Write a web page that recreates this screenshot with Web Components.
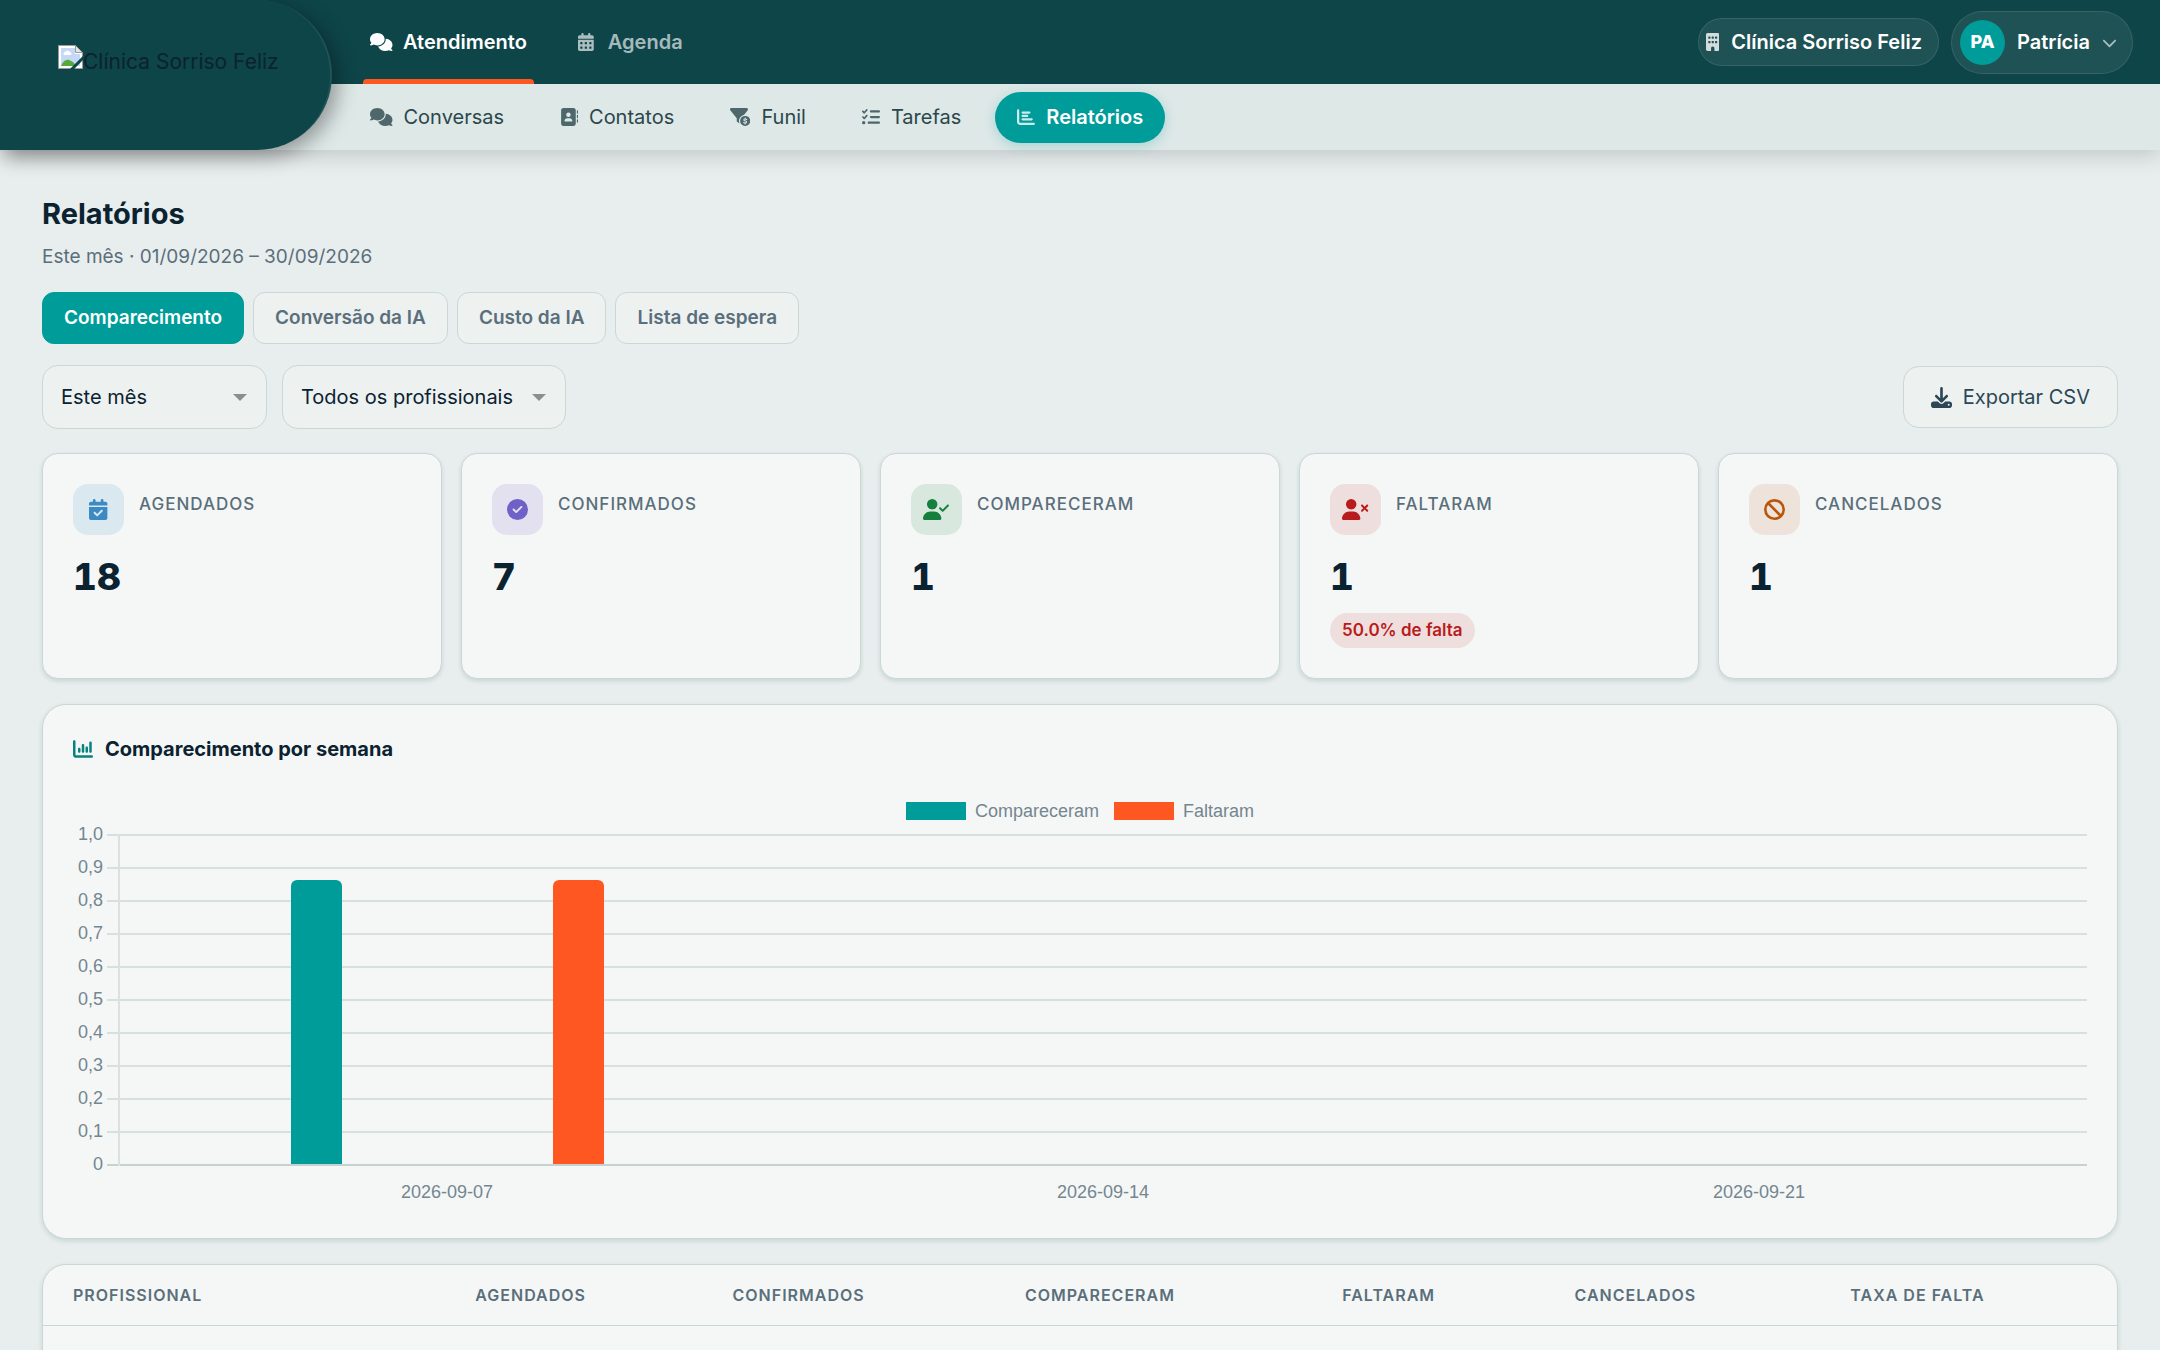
<!DOCTYPE html>
<html lang="pt-BR">
<head>
<meta charset="utf-8">
<meta name="viewport" content="width=device-width, initial-scale=1">
<title>Relatórios · Clínica Sorriso Feliz</title>
<style>
	:root {
		--brand: #009c99;
		--brand-dark: #0e4549;
		--accent: #ff5722;
		--page: #e8eded;
		--subnav: #dde8e7;
		--surface: #f5f7f6;
		--control: #edf1f0;
		--line: #c9d8d5;
		--ink: #0b2230;
		--ink-soft: #5a6f7b;
	}

	body {
		margin: 0;
		background: var(--page);
		color: var(--ink);
		font-family: Inter, "Liberation Sans", sans-serif;
		font-size: 20px;
		line-height: 28px;
	}
</style>
</head>
<body>
<app-header></app-header>
<reports-page></reports-page>

<script>
const CALENDAR_TOP = "M128 0c17.7 0 32 14.3 32 32V64H288V32c0-17.7 14.3-32 32-32s32 14.3 32 32V64h48c26.5 0 48 21.5 48 48v48H0V112C0 85.5 21.5 64 48 64H96V32c0-17.7 14.3-32 32-32z";
const USER = "M96 128a128 128 0 1 1 256 0A128 128 0 1 1 96 128zM0 482.3C0 383.8 79.8 304 178.3 304h91.4C368.2 304 448 383.8 448 482.3c0 16.4-13.3 29.7-29.7 29.7H29.7C13.3 512 0 498.7 0 482.3z";
const CHART_AXES = "M32 32c17.7 0 32 14.3 32 32V400c0 8.8 7.2 16 16 16H480c17.7 0 32 14.3 32 32s-14.3 32-32 32H80c-44.2 0-80-35.8-80-80V64C0 46.3 14.3 32 32 32z";

/** Icon name to [viewBox width, path data]. Every icon is 512 units tall. */
const ICONS = Object.freeze({
	comments: [640, "M208 352c114.9 0 208-78.8 208-176S322.9 0 208 0S0 78.8 0 176c0 38.6 14.7 74.3 39.6 103.4c-3.5 9.4-8.7 17.7-14.2 24.7c-4.8 6.2-9.7 11-13.3 14.3c-1.8 1.6-3.3 2.9-4.3 3.7c-.5 .4-.9 .7-1.1 .8l-.2 .2C1 327.2-1.4 334.4 .8 340.9S9.1 352 16 352c21.8 0 43.8-5.6 62.1-12.5c9.2-3.5 17.8-7.4 25.3-11.4C134.1 343.3 169.8 352 208 352zM448 176c0 112.3-99.1 196.9-216.5 207C255.8 457.4 336.4 512 432 512c38.2 0 73.9-8.7 104.7-23.9c7.5 4 16 7.9 25.2 11.4c18.3 6.9 40.3 12.5 62.1 12.5c6.9 0 13.1-4.5 15.2-11.1c2.1-6.6-.2-13.8-5.8-17.9l-.2-.2c-.2-.2-.6-.4-1.1-.8c-1-.8-2.5-2-4.3-3.7c-3.6-3.3-8.5-8.1-13.3-14.3c-5.5-7-10.7-15.4-14.2-24.7c24.9-29 39.6-64.7 39.6-103.4c0-92.8-84.9-168.9-192.6-175.5c.4 5.1 .6 10.3 .6 15.5z"],
	"calendar-days": [448, `${CALENDAR_TOP}M0 192H448V464c0 26.5-21.5 48-48 48H48c-26.5 0-48-21.5-48-48V192zm64 80v32c0 8.8 7.2 16 16 16h32c8.8 0 16-7.2 16-16V272c0-8.8-7.2-16-16-16H80c-8.8 0-16 7.2-16 16zm128 0v32c0 8.8 7.2 16 16 16h32c8.8 0 16-7.2 16-16V272c0-8.8-7.2-16-16-16H208c-8.8 0-16 7.2-16 16zm144-16c-8.8 0-16 7.2-16 16v32c0 8.8 7.2 16 16 16h32c8.8 0 16-7.2 16-16V272c0-8.8-7.2-16-16-16H336zM64 400v32c0 8.8 7.2 16 16 16h32c8.8 0 16-7.2 16-16V400c0-8.8-7.2-16-16-16H80c-8.8 0-16 7.2-16 16zm144-16c-8.8 0-16 7.2-16 16v32c0 8.8 7.2 16 16 16h32c8.8 0 16-7.2 16-16V400c0-8.8-7.2-16-16-16H208zm112 16v32c0 8.8 7.2 16 16 16h32c8.8 0 16-7.2 16-16V400c0-8.8-7.2-16-16-16H336c-8.8 0-16 7.2-16 16z`],
	"calendar-check": [448, `${CALENDAR_TOP}M0 192H448V464c0 26.5-21.5 48-48 48H48c-26.5 0-48-21.5-48-48V192zM329 305c9.4-9.4 9.4-24.6 0-33.9s-24.6-9.4-33.9 0l-95 95-47-47c-9.4-9.4-24.6-9.4-33.9 0s-9.4 24.6 0 33.9l64 64c9.4 9.4 24.6 9.4 33.9 0L329 305z`],
	"address-book": [512, "M96 0C60.7 0 32 28.7 32 64V448c0 35.3 28.7 64 64 64H384c35.3 0 64-28.7 64-64V64c0-35.3-28.7-64-64-64H96zM208 288h64c44.2 0 80 35.8 80 80c0 8.8-7.2 16-16 16H144c-8.8 0-16-7.2-16-16c0-44.2 35.8-80 80-80zm-32-96a64 64 0 1 1 128 0 64 64 0 1 1 -128 0zM512 80c0-8.8-7.2-16-16-16s-16 7.2-16 16v64c0 8.8 7.2 16 16 16s16-7.2 16-16V80zM496 192c-8.8 0-16 7.2-16 16v64c0 8.8 7.2 16 16 16s16-7.2 16-16V208c0-8.8-7.2-16-16-16zm16 144c0-8.8-7.2-16-16-16s-16 7.2-16 16v64c0 8.8 7.2 16 16 16s16-7.2 16-16V336z"],
	"filter-dollar": [576, "M3.9 22.9C10.5 8.9 24.5 0 40 0H472c15.5 0 29.5 8.9 36.1 22.9s4.6 30.5-5.2 42.5L396.4 195.6C316.2 212.1 256 283 256 368c0 27.4 6.3 53.4 17.5 76.5c-1.6-.8-3.2-1.8-4.7-2.9l-64-48c-8.1-6-12.8-15.5-12.8-25.6V288.9L9 65.3C-.7 53.4-2.8 36.8 3.9 22.9zM288 368a144 144 0 1 1 288 0 144 144 0 1 1 -288 0z", "M432 284v26m0 116v26M474 326c-18-10-36-14-48-14c-42 0-42 42-8 52l30 9c36 11 32 53-14 53c-16 0-34-6-46-14"],
	"list-check": [512, "M152.1 38.2c9.9 8.9 10.7 24 1.8 33.9l-72 80c-4.4 4.9-10.6 7.8-17.2 7.9s-12.9-2.4-17.6-7L7 113C-2.3 103.6-2.3 88.4 7 79s24.6-9.4 33.9 0l22.1 22.1 55.1-61.2c8.9-9.9 24-10.7 33.9-1.8zm0 160c9.9 8.9 10.7 24 1.8 33.9l-72 80c-4.4 4.9-10.6 7.8-17.2 7.9s-12.9-2.4-17.6-7L7 273c-9.4-9.4-9.4-24.6 0-33.9s24.6-9.4 33.9 0l22.1 22.1 55.1-61.2c8.9-9.9 24-10.7 33.9-1.8zM224 96c0-17.7 14.3-32 32-32H480c17.7 0 32 14.3 32 32s-14.3 32-32 32H256c-17.7 0-32-14.3-32-32zm0 160c0-17.7 14.3-32 32-32H480c17.7 0 32 14.3 32 32s-14.3 32-32 32H256c-17.7 0-32-14.3-32-32zM160 416c0-17.7 14.3-32 32-32H480c17.7 0 32 14.3 32 32s-14.3 32-32 32H192c-17.7 0-32-14.3-32-32zM48 368a48 48 0 1 1 0 96 48 48 0 1 1 0-96z"],
	"chart-bar": [512, `${CHART_AXES}m96 96c0-17.7 14.3-32 32-32l192 0c17.7 0 32 14.3 32 32s-14.3 32-32 32H160c-17.7 0-32-14.3-32-32zm32 64H288c17.7 0 32 14.3 32 32s-14.3 32-32 32H160c-17.7 0-32-14.3-32-32s14.3-32 32-32zm0 96H416c17.7 0 32 14.3 32 32s-14.3 32-32 32H160c-17.7 0-32-14.3-32-32s14.3-32 32-32z`],
	"chart-column": [512, `${CHART_AXES}M160 224c17.7 0 32 14.3 32 32v64c0 17.7-14.3 32-32 32s-32-14.3-32-32V256c0-17.7 14.3-32 32-32zm128-64V320c0 17.7-14.3 32-32 32s-32-14.3-32-32V160c0-17.7 14.3-32 32-32s32 14.3 32 32zm64 32c17.7 0 32 14.3 32 32v96c0 17.7-14.3 32-32 32s-32-14.3-32-32V224c0-17.7 14.3-32 32-32zM480 96V320c0 17.7-14.3 32-32 32s-32-14.3-32-32V96c0-17.7 14.3-32 32-32s32 14.3 32 32z`],
	building: [384, "M48 0C21.5 0 0 21.5 0 48V464c0 26.5 21.5 48 48 48h96V432c0-26.5 21.5-48 48-48s48 21.5 48 48v80h96c26.5 0 48-21.5 48-48V48c0-26.5-21.5-48-48-48H48zM64 240c0-8.8 7.2-16 16-16h32c8.8 0 16 7.2 16 16v32c0 8.8-7.2 16-16 16H80c-8.8 0-16-7.2-16-16V240zm112-16h32c8.8 0 16 7.2 16 16v32c0 8.8-7.2 16-16 16H176c-8.8 0-16-7.2-16-16V240c0-8.8 7.2-16 16-16zm80 16c0-8.8 7.2-16 16-16h32c8.8 0 16 7.2 16 16v32c0 8.8-7.2 16-16 16H272c-8.8 0-16-7.2-16-16V240zM80 96h32c8.8 0 16 7.2 16 16v32c0 8.8-7.2 16-16 16H80c-8.8 0-16-7.2-16-16V112c0-8.8 7.2-16 16-16zm80 16c0-8.8 7.2-16 16-16h32c8.8 0 16 7.2 16 16v32c0 8.8-7.2 16-16 16H176c-8.8 0-16-7.2-16-16V112zM272 96h32c8.8 0 16 7.2 16 16v32c0 8.8-7.2 16-16 16H272c-8.8 0-16-7.2-16-16V112c0-8.8 7.2-16 16-16z"],
	"chevron-down": [512, "M233.4 406.6c12.5 12.5 32.8 12.5 45.3 0l192-192c12.5-12.5 12.5-32.8 0-45.3s-32.8-12.5-45.3 0L256 338.7 86.6 169.4c-12.5-12.5-32.8-12.5-45.3 0s-12.5 32.8 0 45.3l192 192z"],
	"circle-check": [512, "M256 512A256 256 0 1 0 256 0a256 256 0 1 0 0 512zM369 209L241 337c-9.4 9.4-24.6 9.4-33.9 0l-64-64c-9.4-9.4-9.4-24.6 0-33.9s24.6-9.4 33.9 0l47 47L335 175c9.4-9.4 24.6-9.4 33.9 0s9.4 24.6 0 33.9z"],
	"user-check": [640, `${USER}M625 177L497 305c-9.4 9.4-24.6 9.4-33.9 0l-64-64c-9.4-9.4-9.4-24.6 0-33.9s24.6-9.4 33.9 0l47 47L591 143c9.4-9.4 24.6-9.4 33.9 0s9.4 24.6 0 33.9z`],
	"user-xmark": [640, `${USER}M471 143c9.4-9.4 24.6-9.4 33.9 0l47 47 47-47c9.4-9.4 24.6-9.4 33.9 0s9.4 24.6 0 33.9l-47 47 47 47c9.4 9.4 9.4 24.6 0 33.9s-24.6 9.4-33.9 0l-47-47-47 47c-9.4 9.4-24.6 9.4-33.9 0s-9.4-24.6 0-33.9l47-47-47-47c-9.4-9.4-9.4-24.6 0-33.9z`],
	ban: [512, "M367.2 412.5L99.5 144.8C77.1 176.1 64 214.5 64 256c0 106 86 192 192 192c41.5 0 79.9-13.1 111.2-35.5zm45.3-45.3C434.9 335.9 448 297.5 448 256c0-106-86-192-192-192c-41.5 0-79.9 13.1-111.2 35.5L412.5 367.2zM0 256a256 256 0 1 1 512 0A256 256 0 1 1 0 256z"],
	download: [512, "M288 32c0-17.7-14.3-32-32-32s-32 14.3-32 32V274.7l-73.4-73.4c-12.5-12.5-32.8-12.5-45.3 0s-12.5 32.8 0 45.3l128 128c12.5 12.5 32.8 12.5 45.3 0l128-128c12.5-12.5 12.5-32.8 0-45.3s-32.8-12.5-45.3 0L288 274.7V32zM64 352c-35.3 0-64 28.7-64 64v32c0 35.3 28.7 64 64 64H448c35.3 0 64-28.7 64-64V416c0-35.3-28.7-64-64-64H346.5l-45.3 45.3c-25 25-65.5 25-90.5 0L165.5 352H64zm368 56a24 24 0 1 1 0 48 24 24 0 1 1 0-48z"],
});

/** Solid glyph; its height follows the font size of the host. */
class AppIcon extends HTMLElement {
	connectedCallback() {
		const [width, path, cut] = ICONS[this.getAttribute("name")];

		this.attachShadow({ mode: "open" }).innerHTML = `
		<style>
			:host { display: inline-flex; flex: none; justify-content: center; font-size: 18px; }
			svg { display: block; height: 1em; fill: currentColor; }
			.cut { fill: none; stroke: var(--subnav); stroke-width: 30; stroke-linecap: round; }
		</style>
		<svg viewBox="0 0 ${width} 512" aria-hidden="true">
			<path fill-rule="evenodd" d="${path}"/>
			${cut ? `<path class="cut" d="${cut}"/>` : ""}
		</svg>`;
	}
}

/** Link of the primary bar or, with the "sub" attribute, of the section bar. */
class NavLink extends HTMLElement {
	connectedCallback() {
		this.attachShadow({ mode: "open" }).innerHTML = `
		<style>
			:host { display: flex; align-items: center; }
			a {
				position: relative;
				display: flex;
				align-items: center;
				gap: 10px;
				height: 100%;
				padding: 0 22px;
				color: rgba(255, 255, 255, .65);
				font-weight: 600;
				text-decoration: none;
			}
			:host(:not([sub])) app-icon { width: 23px; }
			:host([active]) a { color: #fff; }
			:host([active]:not([sub])) a::after {
				content: "";
				position: absolute;
				inset: auto 15px 0;
				height: 5px;
				border-radius: 4px 4px 0 0;
				background: var(--accent);
			}
			:host([sub]) a {
				gap: 11px;
				height: 51px;
				border-radius: 26px;
				color: #2b474c;
				font-weight: 400;
			}
			:host([sub]) app-icon { opacity: .8; }
			:host([sub][active]) a {
				background: var(--brand);
				color: #fff;
				font-weight: 600;
				box-shadow: 0 3px 12px rgba(0, 156, 153, .25);
			}
		</style>
		<a href="#" ${this.hasAttribute("active") ? 'aria-current="page"' : ""}>
			<app-icon name="${this.getAttribute("icon")}"></app-icon>
			<span><slot></slot></span>
		</a>`;
	}
}

class AppHeader extends HTMLElement {
	connectedCallback() {
		this.attachShadow({ mode: "open" }).innerHTML = `
		<style>
			:host {
				position: relative;
				display: grid;
				grid-template: 84px 66px / 332px 1fr;
				background: var(--brand-dark);
				box-shadow: 0 6px 20px rgba(0, 0, 0, .16);
			}
			.logo {
				grid-row: 1 / 3;
				z-index: 1;
				box-sizing: border-box;
				display: flex;
				align-items: flex-start;
				padding: 45px 50px 0 58px;
				border-right: 2px solid rgba(255, 255, 255, .08);
				border-radius: 0 75px 75px 0;
				background: var(--brand-dark);
				box-shadow: 6px 6px 20px rgba(0, 0, 0, .35);
				color: var(--ink);
				font-size: 21px;
				text-decoration: none;
				white-space: nowrap;
			}
			.logo svg { flex: none; width: 25px; height: 24px; }
			.logo span { padding-top: 3px; }
			.bar { display: flex; padding: 0 27px 0 16px; }
			nav { display: flex; gap: 4px; flex: 1; }
			.sub { margin-left: -100px; padding-left: 116px; background: var(--subnav); }
			.sub nav { gap: 12px; }
			.account { display: flex; align-items: center; gap: 12px; }
			button {
				display: flex;
				align-items: center;
				box-sizing: border-box;
				border: 1px solid rgba(255, 255, 255, .1);
				background: rgba(255, 255, 255, .07);
				color: #fff;
				font: inherit;
				font-weight: 600;
			}
			.clinic { gap: 12px; height: 48px; padding: 0 16px 0 7px; border-radius: 24px; }
			.clinic app-icon { opacity: .8; }
			.user { gap: 12px; height: 63px; padding: 0 15px 0 8px; border-radius: 32px; }
			.user app-icon { font-size: 15px; opacity: .6; }
			.avatar {
				display: grid;
				place-items: center;
				width: 45px;
				height: 45px;
				border-radius: 50%;
				background: var(--brand);
				font-size: 18px;
				font-weight: 800;
			}
		</style>
		<a class="logo" href="#">
			<svg viewBox="0 0 25 24" aria-hidden="true">
				<path fill="#fff" stroke="#9a9a9a" stroke-width="1" d="M.5.5h17l7 7v16H.5z"/>
				<path fill="#c5d8f7" d="M3 3h14v6h5v12H3z"/>
				<path fill="#fff" d="M6 10a2 2 0 0 1 1-3 3 3 0 0 1 5 0 2 2 0 0 1 1 3z"/>
				<path fill="#55ab3a" d="M3 21c2-5 5-7 8-6s6 3 7 6z"/>
				<path fill="#e4e4e4" stroke="#9a9a9a" d="M17.500.5v7h7z"/>
				<path stroke="#0e4549" stroke-width="3" d="M13 25 26 12"/>
			</svg>
			<span>Clínica Sorriso Feliz</span>
		</a>
		<div class="bar">
			<nav aria-label="Principal">
				<nav-link icon="comments" active>Atendimento</nav-link>
				<nav-link icon="calendar-days">Agenda</nav-link>
			</nav>
			<div class="account">
				<button class="clinic" type="button"><app-icon name="building"></app-icon>Clínica Sorriso Feliz</button>
				<button class="user" type="button">
					<span class="avatar">PA</span>Patrícia<app-icon name="chevron-down"></app-icon>
				</button>
			</div>
		</div>
		<div class="bar sub">
			<nav aria-label="Atendimento">
				<nav-link sub icon="comments">Conversas</nav-link>
				<nav-link sub icon="address-book">Contatos</nav-link>
				<nav-link sub icon="filter-dollar">Funil</nav-link>
				<nav-link sub icon="list-check">Tarefas</nav-link>
				<nav-link sub icon="chart-bar" active>Relatórios</nav-link>
			</nav>
		</div>`;
	}
}

/** Drop-down with its own caret; options are separated by "|". */
class FilterSelect extends HTMLElement {
	connectedCallback() {
		const options = this.getAttribute("options").split("|");

		this.attachShadow({ mode: "open" }).innerHTML = `
		<style>
			:host { display: inline-block; }
			label { display: grid; align-items: center; }
			select, label::after { grid-area: 1 / 1; }
			select {
				appearance: none;
				box-sizing: border-box;
				min-width: 225px;
				height: 64px;
				padding: 0 51px 0 18px;
				border: 1px solid var(--line);
				border-radius: 16px;
				background: var(--control);
				color: var(--ink);
				font: inherit;
			}
			label::after {
				content: "";
				justify-self: end;
				margin-right: 20px;
				border: 7px solid transparent;
				border-top-color: #8a8f8f;
				border-bottom: 0;
				pointer-events: none;
			}
		</style>
		<label><select aria-label="${this.getAttribute("label")}">
			${options.map((option) => `<option>${option}</option>`).join("")}
		</select></label>`;
	}
}

class StatCard extends HTMLElement {
	connectedCallback() {
		this.attachShadow({ mode: "open" }).innerHTML = `
		<style>
			:host {
				display: block;
				box-sizing: border-box;
				min-height: 226px;
				padding: 30px;
				border: 1px solid var(--line);
				border-radius: 16px;
				background: var(--surface);
				box-shadow: 0 2px 4px rgba(14, 69, 73, .14);
			}
			header { display: flex; gap: 15px; height: 51px; }
			.icon {
				display: grid;
				place-items: center;
				width: 51px;
				height: 51px;
				border-radius: 15px;
				background: var(--tint);
				color: var(--tone);
			}
			app-icon { font-size: 21px; }
			h2 {
				margin: 8px 0 0;
				color: var(--ink-soft);
				font-size: 17px;
				font-weight: 500;
				line-height: 24px;
				letter-spacing: 1px;
				text-transform: uppercase;
			}
			.value {
				margin: 19px 0 0;
				font-size: 37px;
				font-weight: 800;
				font-variant-numeric: tabular-nums;
				line-height: 46px;
			}
			slot[name="note"]::slotted(*) {
				display: inline-block;
				margin-top: 13px;
				padding: 0 12px;
				border-radius: 18px;
				background: var(--tint);
				color: var(--tone);
				font-size: 17px;
				font-weight: 600;
				line-height: 35px;
			}
		</style>
		<header>
			<span class="icon"><app-icon name="${this.getAttribute("icon")}"></app-icon></span>
			<h2>${this.getAttribute("label")}</h2>
		</header>
		<p class="value">${this.getAttribute("value")}</p>
		<slot name="note"></slot>`;
	}
}

/** Grouped bar chart over a 0 to 1 scale. */
class BarChart extends HTMLElement {
	#ticks = ["1,0", "0,9", "0,8", "0,7", "0,6", "0,5", "0,4", "0,3", "0,2", "0,1", "0"];
	#series = [
		{ label: "Compareceram", color: "var(--brand)" },
		{ label: "Faltaram", color: "var(--accent)" },
	];
	#weeks = [
		{ label: "2026-09-07", values: [86, 86] },
		{ label: "2026-09-14", values: [0, 0] },
		{ label: "2026-09-21", values: [0, 0] },
	];

	connectedCallback() {
		const legend = this.#series
			.map(({ label, color }) => `<li><i style="background: ${color}"></i>${label}</li>`)
			.join("");
		const bars = ({ values }) => values
			.map((value, index) => `<span><b style="height: ${value}%; background: ${this.#series[index].color}"></b></span>`)
			.join("");

		this.attachShadow({ mode: "open" }).innerHTML = `
		<style>
			:host {
				display: grid;
				grid-template-columns: 34px 1fr;
				color: #748690;
				font: 18px / 20px "Liberation Sans", Arial, sans-serif;
			}
			ul { margin: 0; padding: 0; list-style: none; }
			.legend { grid-column: 1 / 3; display: flex; justify-content: center; gap: 15px; margin-bottom: 13px; }
			.legend li { display: flex; align-items: center; gap: 9px; }
			.legend i { width: 60px; height: 18px; }
			.scale, .lines { display: flex; flex-direction: column; justify-content: space-between; }
			.scale { padding-right: 4px; text-align: right; }
			.scale li { height: 2px; line-height: 0; }
			.plot { display: grid; height: 332px; }
			.lines, .weeks { grid-area: 1 / 1; }
			.lines i { height: 2px; background: #d6e1df; }
			.lines i:last-child { background: #c6d2d0; }
			.weeks { display: flex; margin-left: 11px; padding-bottom: 2px; border-left: 2px solid #d9e2e1; }
			/* A tenth of each week is left free on either side of its bars. */
			.weeks div { flex: 1; display: flex; padding: 0 calc(10% / 3); }
			.weeks span { flex: 1; display: flex; align-items: flex-end; justify-content: center; }
			.weeks b { width: 51px; border-radius: 6px 6px 0 0; }
			.dates { grid-column: 2; display: flex; margin: 16px 0 0 12px; text-align: center; }
			.dates li { flex: 1; }
		</style>
		<ul class="legend">${legend}</ul>
		<ul class="scale">${this.#ticks.map((tick) => `<li>${tick}</li>`).join("")}</ul>
		<div class="plot">
			<div class="lines">${this.#ticks.map(() => "<i></i>").join("")}</div>
			<div class="weeks">${this.#weeks.map((week) => `<div>${bars(week)}</div>`).join("")}</div>
		</div>
		<ul class="dates">${this.#weeks.map(({ label }) => `<li>${label}</li>`).join("")}</ul>`;
	}
}

class ProfessionalsTable extends HTMLElement {
	/** Column heading and share of the table width, in percent. */
	#columns = [
		["Profissional", 19.4],
		["Agendados", 12.4],
		["Confirmados", 14.1],
		["Compareceram", 15.3],
		["Faltaram", 11.2],
		["Cancelados", 13.3],
		["Taxa de falta", 14.3],
	];

	connectedCallback() {
		this.attachShadow({ mode: "open" }).innerHTML = `
		<style>
			:host { display: block; }
			table { width: 100%; table-layout: fixed; border-collapse: collapse; }
			th, td { padding: 18px 30px; text-align: left; }
			th {
				border-bottom: 1px solid var(--line);
				color: var(--ink-soft);
				font-size: 16px;
				font-weight: 600;
				line-height: 24px;
				letter-spacing: 1px;
				text-transform: uppercase;
				white-space: nowrap;
			}
			td { height: 28px; }
		</style>
		<table>
			<colgroup>${this.#columns.map(([, width]) => `<col style="width: ${width}%">`).join("")}</colgroup>
			<thead><tr>${this.#columns.map(([label]) => `<th scope="col">${label}</th>`).join("")}</tr></thead>
			<tbody><tr>${this.#columns.map(() => "<td></td>").join("")}</tr></tbody>
		</table>`;
	}
}

class ReportsPage extends HTMLElement {
	#tabs = ["Comparecimento", "Conversão da IA", "Custo da IA", "Lista de espera"];

	connectedCallback() {
		const tabs = this.#tabs
			.map((label, index) => `<button type="button" role="tab" aria-selected="${index === 0}">${label}</button>`)
			.join("");

		this.attachShadow({ mode: "open" }).innerHTML = `
		<style>
			:host { display: block; padding: 46px 42px; }
			h1 { margin: 0; font-size: 29px; font-weight: 700; line-height: 36px; }
			.period { margin: 11px 0 21px; color: var(--ink-soft); font-size: 19px; }
			button {
				border: 1px solid var(--line);
				background: var(--control);
				font: inherit;
			}
			.tabs { display: flex; gap: 9px; }
			.tabs button {
				height: 52px;
				padding: 0 21px;
				border-radius: 12px;
				color: var(--ink-soft);
				font-size: 19px;
				font-weight: 600;
			}
			.tabs [aria-selected="true"] { border-color: var(--brand); background: var(--brand); color: #fff; }
			.filters { display: flex; align-items: center; gap: 15px; margin: 21px 0 24px; }
			.export {
				display: flex;
				align-items: center;
				gap: 11px;
				height: 62px;
				margin-left: auto;
				padding: 0 27px;
				border-radius: 16px;
				color: #2b4755;
			}
			.export app-icon { font-size: 21px; }
			.stats { display: grid; grid-template-columns: repeat(5, 1fr); gap: 19px; }
			.panel {
				margin-top: 25px;
				border: 1px solid var(--line);
				border-radius: 24px;
				background: var(--surface);
				box-shadow: 0 2px 5px rgba(14, 69, 73, .14);
			}
			.chart { padding: 30px 30px 36px; }
			h2 { display: flex; align-items: center; gap: 12px; margin: 0 0 38px; font-size: 20px; font-weight: 700; }
			h2 app-icon { color: #07837f; font-size: 20px; }
		</style>
		<h1>Relatórios</h1>
		<p class="period">Este mês · 01/09/2026 – 30/09/2026</p>
		<div class="tabs" role="tablist">${tabs}</div>
		<div class="filters">
			<filter-select label="Período" options="Este mês"></filter-select>
			<filter-select label="Profissional" options="Todos os profissionais"></filter-select>
			<button class="export" type="button"><app-icon name="download"></app-icon>Exportar CSV</button>
		</div>
		<section class="stats">
			<stat-card icon="calendar-check" label="Agendados" value="18" style="--tone: #3b8ac4; --tint: #dae8f0"></stat-card>
			<stat-card icon="circle-check" label="Confirmados" value="7" style="--tone: #6f61c7; --tint: #e3e1ef"></stat-card>
			<stat-card icon="user-check" label="Compareceram" value="1" style="--tone: #15803d; --tint: #d9e8df"></stat-card>
			<stat-card icon="user-xmark" label="Faltaram" value="1" style="--tone: #b91c1c; --tint: #eedfde">
				<span slot="note">50.0% de falta</span>
			</stat-card>
			<stat-card icon="ban" label="Cancelados" value="1" style="--tone: #b8560b; --tint: #eee3db"></stat-card>
		</section>
		<section class="panel chart">
			<h2><app-icon name="chart-column"></app-icon>Comparecimento por semana</h2>
			<bar-chart></bar-chart>
		</section>
		<section class="panel">
			<professionals-table></professionals-table>
		</section>`;
	}
}

customElements.define("app-icon", AppIcon);
customElements.define("nav-link", NavLink);
customElements.define("app-header", AppHeader);
customElements.define("filter-select", FilterSelect);
customElements.define("stat-card", StatCard);
customElements.define("bar-chart", BarChart);
customElements.define("professionals-table", ProfessionalsTable);
customElements.define("reports-page", ReportsPage);
</script>
</body>
</html>
